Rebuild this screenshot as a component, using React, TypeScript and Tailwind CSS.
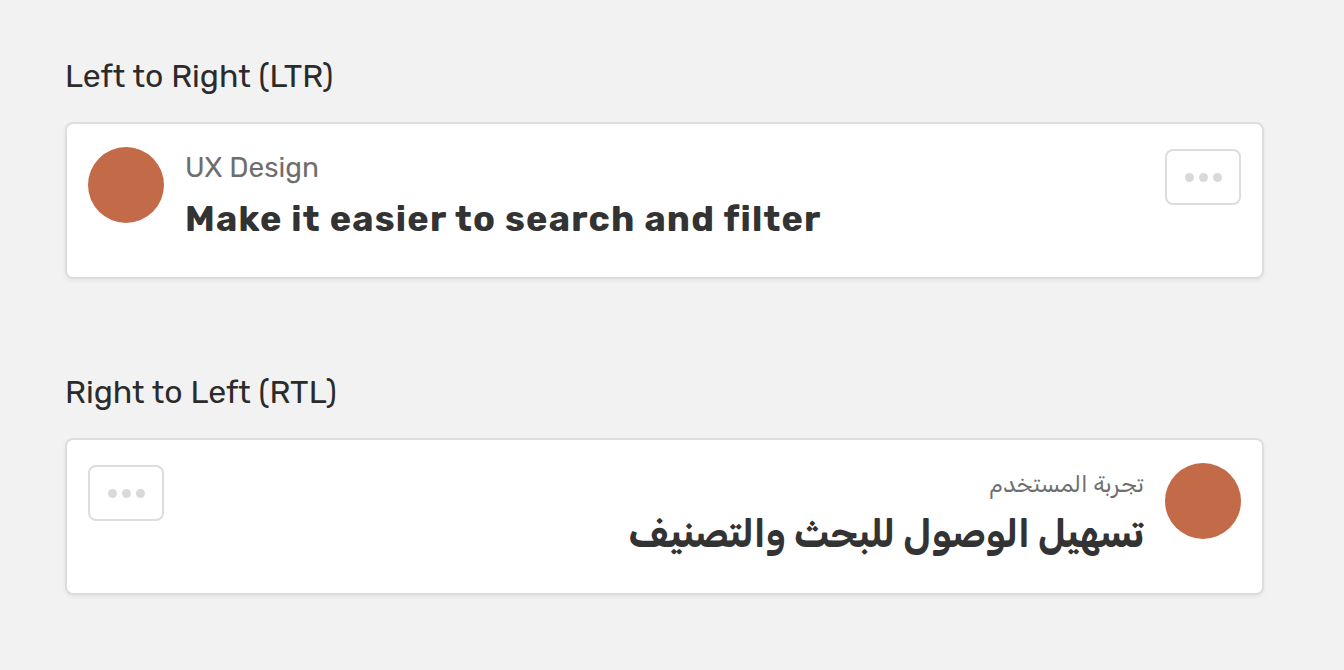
const font = "font-['Rubik','Noto_Sans','DejaVu_Sans',sans-serif]"

type CardProps = {
  dir: "ltr" | "rtl"
  category: string
  title: string
}

function MoreButton() {
  return (
    <button className="flex h-[56px] w-[76px] shrink-0 items-center justify-center gap-[5px] rounded-lg border-2 border-[#dddddd] bg-white">
      <span className="h-[9px] w-[9px] rounded-full bg-[#d9d9d9]" />
      <span className="h-[9px] w-[9px] rounded-full bg-[#d9d9d9]" />
      <span className="h-[9px] w-[9px] rounded-full bg-[#d9d9d9]" />
    </button>
  )
}

function IdeaCard({ dir, category, title }: CardProps) {
  const rtl = dir === "rtl"
  return (
    <div
      dir={dir}
      className="flex min-h-[157px] w-[1199px] items-start gap-[21px] rounded-lg border-2 border-[#dddddd] bg-white px-[21px] pt-[23px] shadow-[0_2px_4px_rgba(0,0,0,0.06)]"
    >
      <div className="h-[76px] w-[76px] shrink-0 rounded-full bg-[#c36a48]" />
      <div className="flex-1 pt-[3px]">
        <div className={rtl ? "text-[23px] leading-[36px] text-[#6e6e6e]" : "text-[28px] leading-[36px] text-[#6e6e6e]"}>
          {category}
        </div>
        <div
          className={
            rtl
              ? "mt-[8px] text-[38px] font-bold leading-[48px] text-[#333333]"
              : "mt-[9px] text-[36px] font-bold leading-[48px] tracking-[1.2px] text-[#333333]"
          }
        >
          {title}
        </div>
      </div>
      <div className="pt-[2px]">
        <MoreButton />
      </div>
    </div>
  )
}

export default function App() {
  return (
    <div className={`min-h-[670px] bg-[#f2f2f2] px-[65px] pt-[54px] ${font}`}>
      <h2 className="text-[32px] leading-[44px] text-[#2b2b2b]">Left to Right (LTR)</h2>
      <div className="mt-[24px]">
        <IdeaCard dir="ltr" category="UX Design" title="Make it easier to search and filter" />
      </div>
      <h2 className="mt-[91px] text-[32px] leading-[44px] text-[#2b2b2b]">Right to Left (RTL)</h2>
      <div className="mt-[24px]">
        <IdeaCard dir="rtl" category="تجربة المستخدم" title="تسهيل الوصول للبحث والتصنيف" />
      </div>
    </div>
  )
}
